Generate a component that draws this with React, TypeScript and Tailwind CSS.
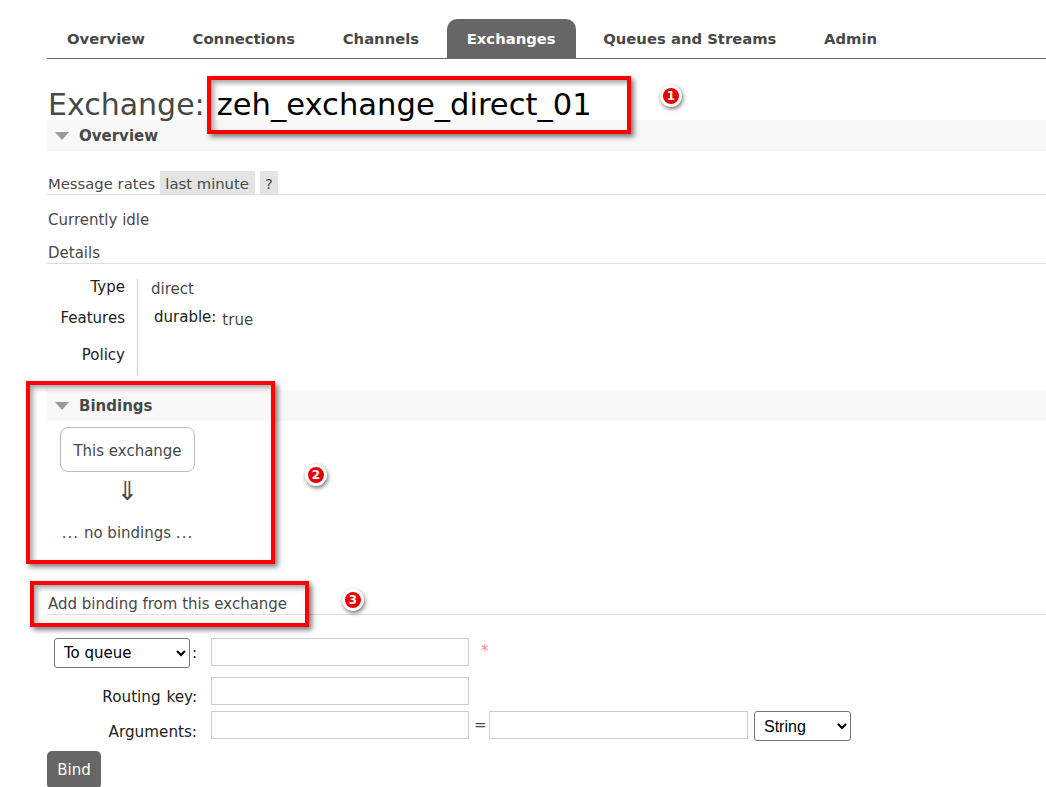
import React from "react";

const tabs = ["Overview", "Connections", "Channels", "Exchanges", "Queues and Streams", "Admin"];

function SectionHeader({ title, className }: { title: string; className: string }) {
  return (
    <div className={`flex h-[31px] items-center bg-[#f8f8f8] pl-2 ${className}`}>
      <span className="mr-[10px] h-0 w-0 border-x-[7px] border-t-[8px] border-x-transparent border-t-[#999]" />
      <span className="pt-[2px] text-[15px] font-bold text-[#484848]">{title}</span>
    </div>
  );
}

function Badge({ n, className }: { n: number; className: string }) {
  return (
    <div
      className={`absolute flex h-[22px] w-[22px] items-center justify-center rounded-full border-[3px] border-white bg-[#e60000] text-[12px] font-bold text-white shadow-[1px_2px_4px_rgba(0,0,0,0.55)] ${className}`}
    >
      {n}
    </div>
  );
}

function RedBox({ className }: { className: string }) {
  return (
    <div className={`absolute border-[4px] border-[#ff0000] shadow-[3px_3px_5px_rgba(0,0,0,0.5),inset_3px_3px_5px_rgba(0,0,0,0.35)] ${className}`} />
  );
}

export default function App() {
  const input = "h-[28px] w-[258px] border border-[#ccc] bg-white";
  const label = "w-[150px] text-right text-[15.2px] leading-[20px] text-[#222] [word-spacing:1px]";
  return (
    <div className="relative h-[787px] w-[1046px] overflow-hidden bg-white pl-[47px] font-['DejaVu_Sans',sans-serif] text-[15px] text-[#484848]">
      {/* nav */}
      <div className="flex h-[59px] items-end border-b border-[#666] pb-0">
        {tabs.map((t) => (
          <div
            key={t}
            className={`mr-[7.6px] flex h-[39px] items-center rounded-t-[10px] px-5 pt-[2px] text-[14.8px] font-bold ${
              t === "Exchanges" ? "bg-[#666] text-white" : "text-[#484848]"
            }`}
          >
            {t}
          </div>
        ))}
      </div>

      {/* title */}
      <div className="-mb-[7px] flex h-[68px] items-end pl-[1px]">
        <h1 className="text-[30px] leading-[44px] text-[#484848]">Exchange:</h1>
        <span className="ml-[12px] text-[30.6px] leading-[44px] text-black">zeh_exchange_direct_01</span>
      </div>

      <SectionHeader title="Overview" className="" />

      <div className="mt-[20px] flex h-[24px] items-center border-b border-[#ddd] pl-[1px] text-[14.8px]">
        <span className="pt-[3px]">Message rates</span>
        <span className="ml-[5px] flex h-[23px] items-center bg-[#e4e4e4] pl-[5px] pr-[6px] pt-[3px]">last minute</span>
        <span className="ml-[5px] flex h-[23px] w-[18px] items-center justify-center bg-[#e4e4e4] pt-[3px]">?</span>
      </div>

      <p className="mt-[15px] h-[20px] pl-[1px] leading-[20px]">Currently idle</p>

      <h3 className="mt-[13px] h-[21px] border-b border-[#ddd] pl-[1px] leading-[20px]">Details</h3>

      <div className="mt-[15px] flex h-[96px]">
        <div className="w-[78px] text-right text-[#222]">
          <div className="mt-[-2px] leading-[20px]">Type</div>
          <div className="mt-[11px] leading-[20px]">Features</div>
          <div className="mt-[17px] leading-[20px]">Policy</div>
        </div>
        <div className="ml-[12px] border-l border-[#ccc] pl-[13px]">
          <div className="leading-[20px]">direct</div>
          <div className="mt-[8px] flex items-start pl-[3px] leading-[20px]">
            <span className="text-[#222]">durable:</span>
            <span className="ml-[6px] mt-[3px]">true</span>
          </div>
        </div>
      </div>

      <SectionHeader title="Bindings" className="mt-[15px]" />

      <div className="flex w-[160px] flex-col items-center pl-[1px]">
        <div className="mt-[6px] flex h-[45px] w-[135px] items-center justify-center rounded-lg border border-[#bbb] pt-[4px]">
          This exchange
        </div>
        <div className="mt-[1px] h-[36px] text-[26px] leading-[36px]">⇓</div>
        <div className="mt-[14px] leading-[20px]">
          <span className="tracking-[1px]">...</span> no bindings <span className="tracking-[1px]">...</span>
        </div>
      </div>

      <h3 className="mt-[50px] h-[22px] border-b border-[#ddd] pl-[1px] leading-[22px]">Add binding from this exchange</h3>

      {/* form */}
      <div className="mt-[23px] flex items-start">
        <select className="ml-[7px] h-[30px] w-[136px] rounded-[3px] border border-[#767676] bg-white pl-[5px] text-[15px] text-black">
          <option>To queue</option>
        </select>
        <span className="ml-[2px] mt-[4px] text-[#222]">:</span>
        <div className={`ml-[14px] ${input}`} />
        <span className="ml-[12px] mt-[2px] text-[#f88]">*</span>
      </div>
      <div className="mt-[9px] flex h-[28px] items-start">
        <span className={`${label} pt-[10px]`}>Routing key:</span>
        <div className={`ml-[14px] ${input}`} />
      </div>
      <div className="mt-[6px] flex h-[30px] items-start">
        <span className={`${label} pt-[11px]`}>Arguments:</span>
        <div className={`ml-[14px] ${input}`} />
        <span className="mx-[5px] w-[10px] pt-[3px] text-center">=</span>
        <div className="h-[28px] w-[259px] border border-[#ccc] bg-white" />
        <select className="ml-[6px] h-[30px] w-[97px] rounded-[3px] border border-[#767676] bg-white pl-[5px] font-['Liberation_Sans',sans-serif] text-[16px] text-black">
          <option>String</option>
        </select>
      </div>
      <button className="mt-[10px] h-[38px] w-[54px] rounded-[5px] bg-[#666] text-[15px] text-white">Bind</button>

      {/* annotations drawn over the screenshot */}
      <RedBox className="left-[207px] top-[76px] h-[58px] w-[424px]" />
      <RedBox className="left-[26px] top-[381px] h-[183px] w-[249px]" />
      <RedBox className="left-[30px] top-[581px] h-[46px] w-[279px]" />
      <Badge n={1} className="left-[660px] top-[85px]" />
      <Badge n={2} className="left-[305px] top-[464px]" />
      <Badge n={3} className="left-[342px] top-[589px]" />
    </div>
  );
}
